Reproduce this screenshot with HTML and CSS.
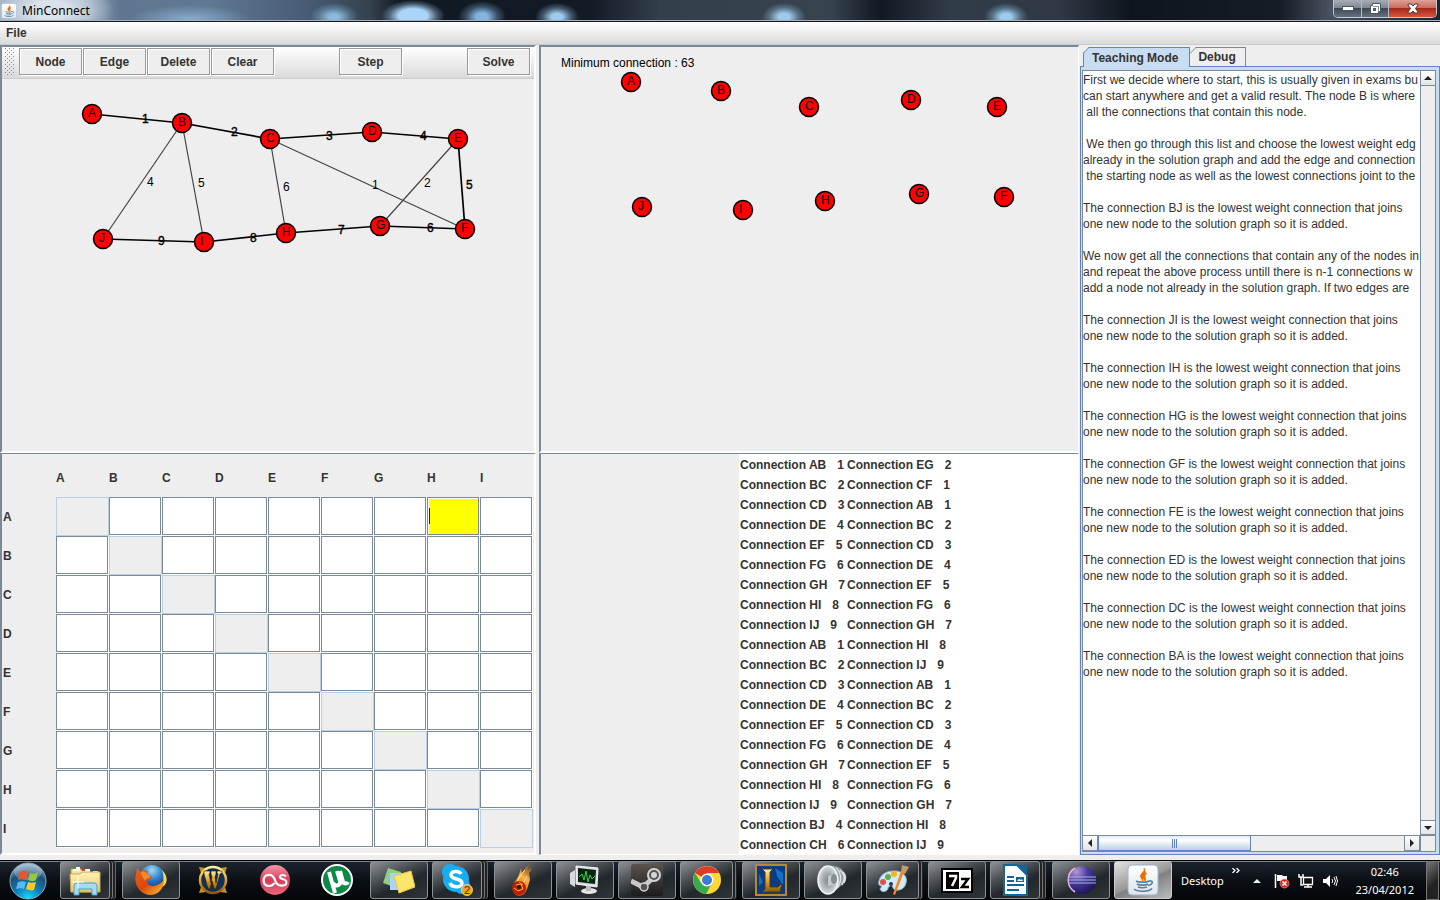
FILE: index.html
```html
<!DOCTYPE html>
<html lang="en">
<head>
<meta charset="utf-8">
<title>MinConnect</title>
<link rel="stylesheet" href="styles.css">
</head>
<body>
<svg class="defs" aria-hidden="true">
  <defs>
    <linearGradient id="paper" x1="0" y1="0" x2="0" y2="1"><stop offset="0" stop-color="#fff"/><stop offset="1" stop-color="#dfe5ea"/></linearGradient>
    <radialGradient id="orb" cx=".5" cy="1" r="1"><stop offset="0" stop-color="#16e0ff"/><stop offset=".35" stop-color="#0f83bd"/><stop offset=".7" stop-color="#1b4f77"/><stop offset="1" stop-color="#9cc0d4"/></radialGradient>
    <linearGradient id="folder" x1="0" y1="0" x2="0" y2="1"><stop offset="0" stop-color="#fff3b8"/><stop offset="1" stop-color="#e6c968"/></linearGradient>
    <radialGradient id="globe" cx=".5" cy=".2" r=".8"><stop offset="0" stop-color="#9adcf8"/><stop offset=".5" stop-color="#2a78c4"/><stop offset="1" stop-color="#0b2766"/></radialGradient>
    <linearGradient id="fox" x1="0" y1="0" x2="1" y2="1"><stop offset="0" stop-color="#e8641b"/><stop offset=".5" stop-color="#d9480f"/><stop offset="1" stop-color="#ffc72e"/></linearGradient>
    <linearGradient id="gold" x1="0" y1="0" x2="0" y2="1"><stop offset="0" stop-color="#fff0a0"/><stop offset=".5" stop-color="#e2a52a"/><stop offset="1" stop-color="#8a5a10"/></linearGradient>
    <linearGradient id="rose" x1="0" y1="0" x2="0" y2="1"><stop offset="0" stop-color="#f29aa8"/><stop offset=".5" stop-color="#d93c55"/><stop offset="1" stop-color="#e8677c"/></linearGradient>
    <linearGradient id="flame" x1=".7" y1="0" x2=".3" y2="1"><stop offset="0" stop-color="#b5651d" stop-opacity=".5"/><stop offset=".4" stop-color="#ffb347"/><stop offset="1" stop-color="#e03a00"/></linearGradient>
    <radialGradient id="ecl" cx=".3" cy=".2" r=".9"><stop offset="0" stop-color="#b59ad8"/><stop offset=".45" stop-color="#4a3a9c"/><stop offset="1" stop-color="#15104f"/></radialGradient>
    <radialGradient id="metal" cx=".5" cy=".5" r=".6"><stop offset="0" stop-color="#7d848a"/><stop offset=".45" stop-color="#aab1b6"/><stop offset=".8" stop-color="#d3d9dd"/><stop offset="1" stop-color="#a2a9af"/></radialGradient>
    <linearGradient id="steam" x1="0" y1="0" x2="0" y2="1"><stop offset="0" stop-color="#5a534f"/><stop offset="1" stop-color="#1c1b1b"/></linearGradient>
    <symbol id="java" viewBox="0 0 32 32">
      <rect x="1" y="1" width="30" height="30" rx="4" fill="url(#paper)" stroke="#9db6cc"/>
      <path d="M17 4c2 4-6 6-3 10l2 3c-1-4 5-6 1-13M20 9c-5 3-4 4-2 8 2-3-2-4 2-8" fill="#e76f00" stroke="#e76f00" stroke-width=".7"/>
      <path d="M9 17c2 1.500 11 1.500 13 0M10 20c2 1.500 9 1.500 11 0M11 23c2 1 7 1 9 0M22 17c5-1 4 4-1 4.500M7 25c3 3 15 3 18-.5" fill="none" stroke="#5382a1" stroke-width="1.600"/>
    </symbol>
  </defs>
</svg>

<header class="titlebar">
  <svg class="title-icon" viewBox="0 0 32 32"><use href="#java"/></svg>
  <h1 class="title-text">MinConnect</h1>
  <div class="window-buttons">
    <button class="win" aria-label="Minimize"><svg width="12" height="6"><rect x=".5" y=".5" width="11" height="4" fill="#fff" stroke="#4b5563"/></svg></button>
    <button class="win" aria-label="Restore"><svg width="12" height="12"><path d="M3.500.5h8v8h-2v2h-8v-8h2z" fill="#fff" stroke="#4b5563"/><rect x="4.500" y="5.500" width="2" height="2" fill="#778" stroke="#4b5563"/><path d="M9.500 3v5.500M4 3.500h5" stroke="#89939f" fill="none"/></svg></button>
    <button class="win win-close" aria-label="Close"><svg width="12" height="11"><path d="M1 1h3l2 2 2-2h3v1L8.500 5.500 11 9v1H8L6 8l-2 2H1V9l2.500-3.500L1 2z" fill="#fff" stroke="#53373a"/></svg></button>
  </div>
</header>

<nav class="menubar"><button class="menu">File</button></nav>

<main class="workspace">
  <section class="pane pane-editor">
    <div class="toolbar">
      <svg class="grip" width="10" height="28" aria-hidden="true"><defs><pattern id="dots" width="4" height="4" patternUnits="userSpaceOnUse"><path d="M1 0h1v1H1zM3 2h1v1H3z" fill="#888"/></pattern></defs><rect width="10" height="28" fill="url(#dots)"/></svg>
      <div class="tools">
        <button class="tool">Node</button><button class="tool">Edge</button><button class="tool">Delete</button><button class="tool">Clear</button><button class="tool tool-step">Step</button><button class="tool tool-solve">Solve</button>
      </div>
    </div>
    <svg class="graph" id="editor-graph" role="img" aria-label="Graph"></svg>
  </section>

  <section class="pane pane-solution">
    <p class="minimum">Minimum connection : 63</p>
    <svg class="graph" id="solution-graph" role="img" aria-label="Solution graph"></svg>
  </section>

  <aside class="tabs">
    <div class="tab-row" role="tablist">
      <button class="tab tab-active" role="tab" aria-selected="true"><svg class="cut" width="7" height="7"><path d="M0 0h6L0 6z" fill="#eee"/><path d="M0 6.500L6.500 0" stroke="#6382bf"/></svg>Teaching Mode</button>
      <button class="tab" role="tab" aria-selected="false"><svg class="cut" width="7" height="7"><path d="M0 0h6L0 6z" fill="#eee"/><path d="M0 6.500L6.500 0" stroke="#7a8a99"/></svg>Debug</button>
    </div>
    <div class="tab-body" role="tabpanel">
      <div class="scrollpane">
        <textarea class="log" wrap="off" readonly aria-label="Teaching Mode">
First we decide where to start, this is usually given in exams bu
can start anywhere and get a valid result. The node B is where
 all the connections that contain this node.

 We then go through this list and choose the lowest weight edg
already in the solution graph and add the edge and connection
 the starting node as well as the lowest connections joint to the
 
The connection BJ is the lowest weight connection that joins
one new node to the solution graph so it is added.

We now get all the connections that contain any of the nodes in
and repeat the above process untill there is n-1 connections w
add a node not already in the solution graph. If two edges are

The connection JI is the lowest weight connection that joins
one new node to the solution graph so it is added.

The connection IH is the lowest weight connection that joins
one new node to the solution graph so it is added.

The connection HG is the lowest weight connection that joins
one new node to the solution graph so it is added.

The connection GF is the lowest weight connection that joins
one new node to the solution graph so it is added.

The connection FE is the lowest weight connection that joins
one new node to the solution graph so it is added.

The connection ED is the lowest weight connection that joins
one new node to the solution graph so it is added.

The connection DC is the lowest weight connection that joins
one new node to the solution graph so it is added.

The connection BA is the lowest weight connection that joins
one new node to the solution graph so it is added.</textarea>
        <div class="vbar">
          <button class="arrow" aria-label="Scroll up"><svg width="8" height="4"><path d="M0 4l4-4 4 4z" fill="#222"/></svg></button>
          <button class="arrow arrow-down" aria-label="Scroll down"><svg width="8" height="4"><path d="M0 0l4 4 4-4z" fill="#222"/></svg></button>
        </div>
        <div class="hbar">
          <button class="arrow" aria-label="Scroll left"><svg width="4" height="8"><path d="M4 0L0 4l4 4z" fill="#222"/></svg></button>
          <div class="track"><div class="thumb"><svg width="6" height="9"><path d="M.5 0v9M2.500 0v9M4.500 0v9" stroke="#6382bf"/></svg></div></div>
          <button class="arrow" aria-label="Scroll right"><svg width="4" height="8"><path d="M0 0l4 4-4 4z" fill="#222"/></svg></button>
        </div>
        <div class="corner"></div>
      </div>
    </div>
  </aside>

  <section class="pane pane-matrix"><table class="matrix" id="matrix"></table></section>

  <section class="pane pane-list">
    <div class="connections"><ul class="column" id="list-one"></ul><ul class="column" id="list-two"></ul></div>
  </section>
</main>

<footer class="taskbar">
  <button class="start" aria-label="Start"><svg width="38" height="38" viewBox="0 0 38 38"><circle cx="19" cy="19" r="18" fill="url(#orb)" stroke="#8fa9b8"/><ellipse cx="19" cy="10" rx="14" ry="8" fill="#fff" opacity=".25"/><path d="M11 10c3-2 6-1 8 0l-2 8c-3-1-5-1-8 0z" fill="#e8562a"/><path d="M21 11c3 1 5 1 8-1l-2 8c-3 2-5 1-8 0z" fill="#9bc53d"/><path d="M9 20c3-1 5-1 8 0l-2 7c-2-1-5-1-8 0z" fill="#5bb8ee"/><path d="M19 20c3 1 5 1 8 0l-2 8c-3 1-5 0-8-1z" fill="#fbc926"/></svg></button>
  <button class="task stack2" aria-label="Explorer"><svg viewBox="0 0 32 32"><path d="M2 28V5h10l2 3h15v20z" fill="#f4e29a" stroke="#b79b4b"/><path d="M4 3h7v4H4zM13 5h8v4h-8zM21 7h8v4h-8z" fill="#fff"/><path d="M4 3h3v2H4z" fill="#27a839"/><path d="M13 5h3v2h-3z" fill="#d8431f"/><path d="M21 7h3v2h-3z" fill="#2b8ed8"/><path d="M1 10h10l2-2h18v20H2z" fill="url(#folder)" stroke="#c5a953"/><path d="M5 31V22q0-3 3-3h17q3 0 3 3v9h-5v-6H10v6z" fill="#a9daf0" stroke="#4f9dc5"/><path d="M9 12v12M3 18h12" stroke="#fff" stroke-width="1"/></svg></button>
  <button class="task" aria-label="Firefox"><svg viewBox="0 0 32 32"><circle cx="17" cy="14" r="13" fill="url(#globe)"/><path d="M27 6c2 6 3 13-4 19 9-2 12-11 4-19" fill="#ffd94a"/><path d="M2 4l4 4c2-2 5-2 7-1l-1 3 5 3c-1 3-5 2-5 5 1 4 6 5 10 3 3-1 6-3 7-7 1 10-6 17-14 17C5 31-2 20 1 10z" fill="url(#fox)"/><path d="M6 8c3-1 5 0 6 2l4 3c-2 1-5 1-6 4-1-3-4-5-4-9" fill="#f58a2c"/></svg></button>
  <button class="task task-plain" aria-label="World of Warcraft"><svg viewBox="0 0 32 32"><path d="M2 3l7 1-5 5zM30 3l-7 1 5 5zM2 29l2-6 5 5zM30 29l-2-6-5 5z" fill="#c88d28"/><circle cx="16" cy="16" r="13" fill="#12305a" stroke="url(#gold)" stroke-width="2.500"/><path d="M7 7h6v2l-1 1 2 9 1-6-1-3V7h5v3l-1 3 1 6 2-9-1-1V7h5v2l-2 1-4 15h-2l-2-8-2 8h-2L7 10z" fill="url(#gold)" stroke="#1d1305" stroke-width=".6"/></svg></button>
  <button class="task task-plain" aria-label="Last.fm"><svg viewBox="0 0 32 32"><circle cx="16" cy="16" r="15" fill="url(#rose)"/><path d="M15.500 19c-2 3-5 3.500-8 2.500-4-2-4-9 1-10.500 4-1 6 1 7.500 5 1 4 4 6 8 5.500 4 0 4.500-5 1-6-3-1-4.500-1-4-3 .5-2 4-2 6 0" fill="none" stroke="#fff" stroke-width="2.200"/></svg></button>
  <button class="task task-plain" aria-label="uTorrent"><svg viewBox="0 0 32 32"><circle cx="16" cy="16" r="15" fill="#0a8a46" stroke="#fff" stroke-width="2"/><path d="M8 8l6 21M12 19c2 4 8 3 7-2L16 7M19 7l3 11c1 2 4 2 5 0" fill="none" stroke="#fff" stroke-width="4"/></svg></button>
  <button class="task" aria-label="Sticky Notes"><svg viewBox="0 0 32 32"><path d="M5 4l13 4-4 16L0 19z" fill="#8fd080"/><path d="M7 9h13v17H7z" fill="#a9d3f7"/><path d="M11 12l17-5 4 16-16 6z" fill="#fbe56b" stroke="#e8c839"/></svg></button>
  <button class="task stack2" aria-label="Skype"><svg viewBox="0 0 32 32"><circle cx="9" cy="8" r="8" fill="#16aef0"/><circle cx="21" cy="22" r="8" fill="#16aef0"/><circle cx="15" cy="15" r="13" fill="#16aef0"/><path d="M20 10c-2-4-10-3-10 1 0 5 11 3 11 8 0 5-10 5-12 0" fill="none" stroke="#fff" stroke-width="3.500"/><circle cx="26" cy="26" r="5.500" fill="#f7a21b" stroke="#ffe0a0" stroke-width=".8"/><text x="23" y="30" class="badge">2</text></svg></button>
  <button class="task" aria-label="Comet"><svg viewBox="0 0 32 32"><path d="M23 0l-2 6 4-4-1 5-2 2 1 6c-2 8-4 17-11 17-8-1-7-11-3-16l3-5 2-7 1 5 4-6z" fill="url(#flame)"/><path d="M18 6c-4 4-6 8-8 12M20 12l-4 8M14 10l-4 8" stroke="#ffe08a" fill="none"/><circle cx="12" cy="24" r="7" fill="#b52207"/><path d="M7 24l4 3 5-2-2-5-5 1M12 18l4 3" stroke="#ffb52f" fill="none"/><circle cx="12" cy="23" r="2" fill="#461007"/></svg></button>
  <button class="task" aria-label="Monitor"><svg viewBox="0 0 32 32"><path d="M1 9l5-3v17l-5-3z" fill="#d8dbdc"/><path d="M7 2l22 2-1 19-21-3z" fill="#ddd" stroke="#f5f5f5"/><path d="M9 4l18 2-1 14-17-2z" fill="#062410"/><path d="M10 13l3-3 2 6 2-9 2 11 2-7 2 4 3-3" stroke="#37d34a" fill="none"/><ellipse cx="20" cy="27" rx="8" ry="3" fill="#e5e5e5"/><path d="M17 22h5v5h-5z" fill="#bbb"/></svg></button>
  <button class="task" aria-label="Steam"><svg viewBox="0 0 32 32"><rect width="32" height="32" rx="3" fill="url(#steam)"/><path d="M0 17l12 6 11-10" stroke="#c8c8c8" stroke-width="5" fill="none"/><circle cx="23" cy="11" r="6" fill="#555" stroke="#d5d5d5" stroke-width="2"/><circle cx="23" cy="11" r="3" fill="#d5d5d5"/><circle cx="13" cy="23" r="4" fill="#555" stroke="#d5d5d5" stroke-width="1.500"/></svg></button>
  <button class="task stack1" aria-label="Chrome"><svg viewBox="0 0 32 32"><circle cx="16" cy="16" r="14" fill="#fdd835"/><path d="M16 16L4 9A14 14 0 0 1 28 9H16z" fill="#dd3b2f"/><path d="M4 9A14 14 0 0 0 15 30l6-11-5-3-6 3z" fill="#39a852"/><circle cx="16" cy="16" r="6.500" fill="#fff"/><circle cx="16" cy="16" r="5" fill="#377dd6"/></svg></button>
  <button class="task" aria-label="League of Legends"><svg viewBox="0 0 32 32"><rect x="1" y="1" width="30" height="30" fill="#0b3b85" stroke="#b58a35" stroke-width="2"/><path d="M20 4l8 5v12l-6-9zM4 10l4 8-4 4z" fill="#1470c4"/><path d="M7 5h11l-3 3v15h8l4-4-2 9H7l3-3V8z" fill="url(#gold)" stroke="#593909"/></svg></button>
  <button class="task" aria-label="Sound"><svg viewBox="0 0 32 32"><path d="M14 2c7-1 12 3 14 9l-2 9-10 9z" fill="#9299a0"/><path d="M19 4c6 5 6 14 1 20M23 6c5 4 5 10 2 15M26 8c3 3 3 7 1 11" fill="none" stroke="#d9dee2" stroke-width="1.600"/><ellipse cx="11" cy="16" rx="10" ry="14" fill="url(#metal)" stroke="#f2f5f6" stroke-width="1.500"/><path d="M11 12l7-2v10l-7 2z" fill="#c3c9cd"/><ellipse cx="17" cy="15" rx="3" ry="5" fill="#868e95"/></svg></button>
  <button class="task stack1" aria-label="Paint"><svg viewBox="0 0 32 32"><path d="M16 7c10-1 15 6 13 12-2 9-12 8-13 5 0-3-4-3-5 0 0 4-7 5-8 1l2-3c-3 0-4-2-3-5 1-6 7-10 14-10z" fill="#d2e9f8" stroke="#88b4d0"/><circle cx="6" cy="18" r="3" fill="#df5146"/><circle cx="11" cy="13" r="3" fill="#62ae45"/><circle cx="17" cy="10" r="3" fill="#f2b624"/><circle cx="14" cy="20" r="2" fill="#24384b"/><path d="M24 7l3 1-9 23-2-1z" fill="#f08a24"/><path d="M24 8l1-7 7 2-4 7z" fill="#c59b6a"/></svg></button>
  <button class="task" aria-label="7-Zip"><svg viewBox="0 0 32 32"><path d="M1 5h30v23H1z" fill="#fff" stroke="#000" stroke-width="2"/><path d="M5 8h13v17H5z"/><path d="M8 12h7v2l-4 8" stroke="#fff" stroke-width="2.500" fill="none"/><path d="M20 15h7l-6 8h7" fill="none" stroke="#000" stroke-width="2.500"/></svg></button>
  <button class="task stack2" aria-label="Writer"><svg viewBox="0 0 32 32"><path d="M5 1h13l10 10v20H5z" fill="#fff" stroke="#176594" stroke-width="2"/><path d="M18 1l10 10V1z" fill="#176594"/><path d="M8 13h7M8 17h7M8 21h17M8 26h12" stroke="#176594" stroke-width="2"/><rect x="17" y="13" width="8" height="5" fill="#176594"/><path d="M18 17l2-2 2 1 1-1 1 2z" fill="#fff"/></svg></button>
  <button class="task" aria-label="Eclipse"><svg viewBox="0 0 32 32"><circle cx="17" cy="16" r="14" fill="url(#ecl)"/><path d="M10 4A14 14 0 0 0 10 28" fill="none" stroke="#e9b4d8" stroke-width="1.500"/><path d="M3 13h28M3 16h28M3 19h28" stroke="#a8b5e6"/></svg></button>
  <button class="task task-active" aria-label="MinConnect"><svg viewBox="0 0 32 32"><use href="#java"/></svg></button>
  <div class="tray">
    <span class="desk">Desktop</span>
    <svg class="chevrons" width="8" height="5"><path d="M.5 0L3 2.500.5 5M4.500 0L7 2.500 4.500 5" fill="none" stroke="#fff" stroke-width="1.300"/></svg>
    <svg class="up" width="8" height="4"><path d="M0 4l4-4 4 4z" fill="#e8eef5"/></svg>
    <svg width="16" height="16"><path d="M1.500 1v14" stroke="#fff" stroke-width="1.500"/><path d="M3 2h5l1 1h4v6H8L7 8H3z" fill="#fff"/><circle cx="10.500" cy="10.500" r="4.500" fill="#d32b22" stroke="#f4a6a0" stroke-width=".6"/><path d="M8.500 8.500l4 4M12.500 8.500l-4 4" stroke="#fff" stroke-width="1.600"/></svg>
    <svg width="16" height="16"><path d="M5.500 4.500h9v7h-9z" fill="#111" stroke="#fff" stroke-width="1.300"/><path d="M6 14h8M10 11v3M1 1v3h4V1M3 4v8h2" fill="none" stroke="#fff" stroke-width="1.500"/></svg>
    <svg width="16" height="16"><path d="M1 6h3l4-4v12l-4-4H1z" fill="#fff"/><path d="M10 6q1.500 2 0 4M12 4q3 4 0 8M14 3q3 5 0 10" fill="none" stroke="#fff"/></svg>
    <time class="clock">02:46<br>23/04/2012</time>
    <button class="show-desktop" aria-label="Show desktop"></button>
  </div>
</footer>
<script src="app.js"></script>
</body>
</html>
```
FILE: styles.css
```css
* { box-sizing: border-box; }
body {
  margin: 0;
  height: 100vh;
  display: flex;
  flex-direction: column;
  overflow: hidden;
  background: #eee;
  color: #333;
  font: 12px/16px "Liberation Sans", Arial, sans-serif;
}
button { font: inherit; color: inherit; padding: 0; border: 0; background: none; }
.defs { position: absolute; width: 0; height: 0; }

/* Title bar */
.titlebar {
  flex: none;
  height: 22px;
  display: flex;
  align-items: center;
  padding-left: 1px;
  border-bottom: 1px solid #15181f;
  box-shadow: inset 0 -1px #a9afba;
  background:
    radial-gradient(ellipse 64px 30px at 50px 10px, rgba(225,232,240,.9) 30%, transparent),
    radial-gradient(ellipse 60px 14px at 190px 19px, #86abd0, transparent),
    radial-gradient(ellipse 24px 14px at 334px 17px, #8ab9dc 20%, rgba(138,185,220,.35) 65%, transparent),
    radial-gradient(ellipse 32px 16px at 413px 16px, #abd5f8 45%, rgba(171,213,248,.35) 75%, transparent),
    radial-gradient(ellipse 24px 16px at 482px 17px, #83b4df 25%, rgba(131,180,223,.35) 65%, transparent),
    radial-gradient(ellipse 22px 14px at 557px 17px, #9bcbee 25%, rgba(155,203,238,.35) 65%, transparent),
    radial-gradient(ellipse 22px 14px at 784px 17px, #9dcbee 25%, rgba(157,203,238,.35) 65%, transparent),
    radial-gradient(ellipse 22px 14px at 1006px 17px, #9acaee 25%, rgba(154,202,238,.35) 65%, transparent),
    linear-gradient(90deg, #98a8bd 0, #8ea2ba 90px, #5f7690 120px, #5f7893 210px, #465b74 310px, #35424f 370px, #111923 400px, #121a25 590px, #333f4b 660px, #37434f 830px, #111923 880px, #303c48 950px, #2e3945 1060px, #0e151e 1130px, #151c26 1280px, #475260 1330px, #1d252f 1438px);
}
.title-icon { width: 16px; height: 16px; }
.title-text { margin: 0 0 0 5px; font: 12px/20px "Noto Sans", sans-serif; color: #000; }
.window-buttons {
  align-self: flex-start;
  margin-left: auto;
  margin-right: 3px;
  height: 18px;
  display: grid;
  grid-template-columns: 28px 27px 47px;
  border: 1px solid #c4c9d0;
  border-top: 0;
  border-radius: 0 0 5px 5px;
  overflow: hidden;
}
.win { display: grid; place-items: center; border-right: 1px solid #b7bdc7; background: linear-gradient(#a7adb6, #7b838f 50%, #3f4854 50%, #66717f); }
.win-close { border: 0; background: linear-gradient(#dfa197, #c7685b 48%, #a8291a 50%, #d4563c); }

/* Menu bar */
.menubar { flex: none; height: 23px; display: flex; padding-left: 6px; border-bottom: 1px solid #ccc; background: linear-gradient(#fff, #dadada); }
.menu { font-weight: bold; }

/* Split panes */
.workspace {
  flex: 1;
  min-height: 0;
  display: grid;
  grid-template-columns: minmax(0, 539fr) minmax(0, 541fr) minmax(0, 360fr);
  grid-template-rows: minmax(0, 408fr) minmax(0, 402fr);
  grid-template-areas: "editor solution tabs" "matrix list tabs";
  padding-bottom: 5px;
}
.pane { position: relative; min-width: 0; overflow: hidden; border: 2px solid #7a8a99; border-right-color: #fff; border-bottom-color: #fff; }
.pane-editor { grid-area: editor; margin-right: 3px; display: flex; flex-direction: column; }
.pane-solution { grid-area: solution; margin-right: 1px; border-right-width: 1px; }
.pane-matrix { grid-area: matrix; margin-right: 3px; border-top-width: 1px; padding-right: 1px; }
.pane-list { grid-area: list; margin-right: 1px; border-top-width: 1px; border-right-width: 1px; border-bottom-width: 1px; display: flex; justify-content: flex-end; }

/* Toolbar */
.toolbar { flex: none; height: 32px; display: flex; padding: 1px 4px 0 2px; border-bottom: 1px solid #ccc; background: linear-gradient(#fff, #dadada); }
.grip { flex: none; margin-right: 5px; }
.tools { flex: 1; display: grid; grid-template-columns: repeat(8, minmax(0, 1fr)); column-gap: 1px; }
.tool { height: 27px; border: 1px solid #999; background: #eee; box-shadow: 1px 1px #fff, inset 1px 1px #fff; font-weight: bold; }
.tool-step { grid-column: 6; }
.tool-solve { grid-column: 8; }

/* Graph canvases */
.graph { display: block; width: 100%; flex: 1; min-height: 0; font-size: 12px; }
.pane-solution .graph { position: absolute; left: 0; top: 0; height: 100%; }
.node { fill: #f00; stroke: #000; stroke-width: 1.5; }
.edge { stroke: #444; stroke-width: 1.2; }
.edge-heavy { stroke: #000; stroke-width: 1.7; }
.name, .weight { fill: #000; }
.weight-heavy { stroke: #000; stroke-width: 0.4; }
.minimum { margin: 0; padding: 8px 20px; color: #000; }

/* Adjacency matrix */
.matrix { width: 100%; table-layout: fixed; border-collapse: collapse; }
.matrix th { padding: 0; text-align: left; height: 39px; }
.matrix thead th { height: 43px; padding-top: 4px; }
.matrix td { padding: 0; height: 39px; }
.matrix .row-head { width: 54px; padding-left: 1px; }
.cell { display: block; width: calc(100% - 1px); height: 38px; margin-bottom: 1px; border: 1px solid #7a8a99; border-radius: 0; padding: 0 2px; background: #fff; box-shadow: 1px 1px #fff, inset 1px 1px #fff; outline: 0; font: inherit; }
.cell-off { width: 100%; height: 39px; margin: 0; border-color: #b8cfe5; background: #eee; box-shadow: none; }
.cell-focus { background: linear-gradient(#222, #222) 1px center / 1px 16px no-repeat, #ff0; }

/* Connection lists */
.connections { width: 339px; display: flex; padding-top: 1px; background: #fff; font-weight: bold; }
.column { flex: none; width: 107px; margin: 0; padding: 0 0 0 1px; list-style: none; }
.column li { display: flex; gap: 11px; height: 20px; line-height: 20px; white-space: nowrap; }

/* Tabs and text log */
.tabs { grid-area: tabs; min-width: 0; display: flex; flex-direction: column; padding-top: 2px; }
.tab-row { display: flex; padding-left: 3px; }
.tab { position: relative; height: 19px; padding: 0 9px 0 7px; border: 1px solid #7a8a99; border-bottom: 0; border-left-color: transparent; font-weight: bold; line-height: 18px; }
.tab-active { z-index: 1; height: 20px; margin-bottom: -1px; padding: 0 11px 0 8px; border-color: #6382bf; background: #c8ddf2; }
.cut { position: absolute; left: -1px; top: -1px; }
.tab-body { flex: 1; min-height: 0; display: flex; border: 1px solid #6382bf; background: #c8ddf2; padding: 3px 3px 2px 1px; }
.scrollpane { flex: 1; min-width: 0; display: grid; grid-template-columns: minmax(0, 1fr) 15px; grid-template-rows: minmax(0, 1fr) 16px; border: 1px solid #7a8a99; background: #fff; }
.log { display: block; width: 100%; height: 100%; margin: 0; padding: 1px 0; border: 0; outline: 0; resize: none; overflow: hidden; color: #333; background: #fff; font: 12px/16px "Liberation Sans", Arial, sans-serif; }
.vbar { display: flex; flex-direction: column; justify-content: space-between; border-left: 1px solid #7a8a99; background: #eee; }
.hbar { display: flex; border-top: 1px solid #7a8a99; background: #eee; }
.arrow { display: grid; place-items: center; width: 15px; height: 15px; flex: none; border: 1px solid #7a8a99; border-width: 0 1px 1px 0; background: linear-gradient(#fff, #e3e3e3); }
.arrow-down { border-width: 1px 1px 1px 0; }
.track { flex: 1; border-right: 1px solid #7a8a99; }
.thumb { width: 50%; height: 15px; display: grid; place-items: center; border: 1px solid #6382bf; border-top: 0; background: linear-gradient(#dfeaf6, #fff 30%, #b8cfe5); }
.corner { border: 1px solid #7a8a99; border-width: 1px 0 0 1px; background: #eee; }

/* Taskbar */
.taskbar {
  flex: none;
  height: 40px;
  display: flex;
  gap: 4px;
  padding-top: 1px;
  background: linear-gradient(#000 1px, #77828e 1px, #77828e 2px, #1b232c 2px, #0a0e13 22px, #040608);
}
.start { width: 56px; display: grid; place-items: center; }
.task { position: relative; flex: none; width: 58px; height: 38px; display: grid; place-items: center; border: 1px solid #8c9196; border-radius: 3px; background: linear-gradient(155deg, #8f9295, #4c5054 35%, #22272b 60%, #2f3438); }
.task svg { width: 32px; height: 32px; }
.task-plain { border-color: transparent; background: none; }
.task-active { background: linear-gradient(155deg, #e2e2e2, #999 50%, #808080 55%, #bbb); border-color: #ccc; }
.stack1 { width: 53px; margin-right: 5px; box-shadow: 2px 0 #222, 3px 0 #777, 4px 0 #222; }
.stack2 { width: 50px; margin-right: 8px; box-shadow: 2px 0 #222, 3px 0 #777, 5px 0 #222, 6px 0 #666; }
.badge { font: 11px "Liberation Sans", sans-serif; fill: #333; }
.tray { flex: 1; display: flex; align-items: center; gap: 8px; padding-left: 5px; color: #fff; font: 11px/18px "Noto Sans", sans-serif; }
.chevrons { align-self: flex-start; margin-top: 7px; }
.up { margin: 0 5px; }
.clock { margin-left: auto; text-align: center; }
.show-desktop { align-self: stretch; width: 13px; margin: 0 1px 0 4px; border: 1px solid #777; background: linear-gradient(135deg, #777, #222 60%); }
```
FILE: app.js
```js
const SVG = "http://www.w3.org/2000/svg";

const nodes = {
  A: [92, 114], B: [182, 123], C: [270, 139], D: [372, 132], E: [458, 139],
  F: [465, 229], G: [380, 226], H: [286, 233], I: [204, 242], J: [103, 239],
};
const heavy = "AB1 BC2 CD3 DE4 EF5 FG6 GH7 HI8 IJ9".split(" ");
const light = "BJ4 BI5 CH6 CF1 EG2".split(" ");

function add(parent, tag, attrs, text) {
  const el = document.createElementNS(SVG, tag);
  for (const key in attrs) el.setAttribute(key, attrs[key]);
  if (text) el.textContent = text;
  parent.append(el);
}

function drawGraph(id, edges, dx, dy) {
  const svg = document.getElementById(id);
  for (const edge of edges) {
    const [x1, y1] = nodes[edge[0]];
    const [x2, y2] = nodes[edge[1]];
    const bold = heavy.includes(edge);
    add(svg, "line", { x1: x1 + dx, y1: y1 + dy, x2: x2 + dx, y2: y2 + dy, class: bold ? "edge edge-heavy" : "edge" });
    add(svg, "text", { x: Math.floor((x1 + x2) / 2) + dx + 5, y: Math.floor((y1 + y2) / 2) + dy + 5, class: bold ? "weight weight-heavy" : "weight" }, edge[2]);
  }
  for (const name in nodes) {
    const [x, y] = nodes[name];
    add(svg, "circle", { cx: x + dx, cy: y + dy, r: 9.5, class: "node" });
    add(svg, "text", { x: x + dx - 4, y: y + dy + 3, class: "name" }, name);
  }
}
drawGraph("editor-graph", [...light, ...heavy], -2, -79);
drawGraph("solution-graph", [], -2, -79);

const letters = [..."ABCDEFGHI"];
const matrix = document.getElementById("matrix");
matrix.innerHTML =
  `<thead><tr><th class="row-head"></th>${letters.map((c) => `<th scope="col">${c}</th>`).join("")}</tr></thead><tbody>` +
  letters.map((r) =>
    `<tr><th class="row-head" scope="row">${r}</th>` +
    letters.map((c) => {
      const state = r === c ? " cell-off" : r + c === "AH" ? " cell-focus" : "";
      return `<td><input class="cell${state}" aria-label="${r} to ${c}"${r === c ? " readonly" : ""}></td>`;
    }).join("") + "</tr>").join("") + "</tbody>";

function fillList(id, items) {
  document.getElementById(id).innerHTML = items
    .map((e) => `<li><span>Connection ${e.slice(0, 2)}</span><span>${e[2]}</span></li>`).join("");
}
fillList("list-one", [...heavy, ...heavy, "BJ4", "CH6"]);
fillList("list-two", ["EG2", "CF1", ...heavy, ...heavy]);
```
